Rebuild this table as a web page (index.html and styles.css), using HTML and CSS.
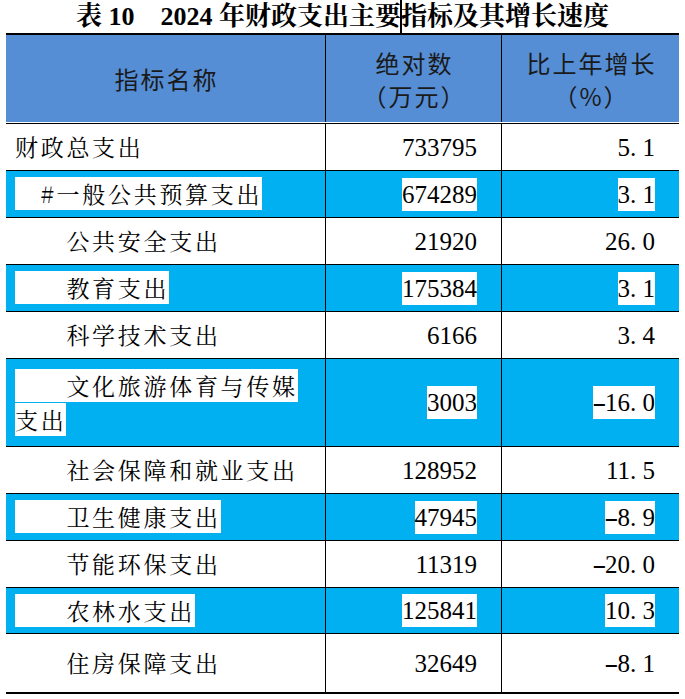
FILE: index.html
```html
<!DOCTYPE html>
<html lang="zh-CN">
<head>
<meta charset="utf-8">
<title>表10 2024年财政支出主要指标及其增长速度</title>
<link rel="stylesheet" href="styles.css">
</head>
<body>
<div class="title">表 10　2024 年财政支出主要<span class="caret"></span>指标及其增长速度</div>
<div class="table">
  <div class="row head">
    <div class="cell c1 hc">指标名称</div>
    <div class="cell c2 hc"><div>绝对数</div><div>（万元）</div></div>
    <div class="cell c3 hc"><div>比上年增长</div><div>（%）</div></div>
  </div>
  <div class="row first">
    <div class="cell c1"><p class="label"><span class="mark">财政总支出</span></p></div>
    <div class="cell c2 num"><span class="mark">733795</span></div>
    <div class="cell c3 num"><span class="mark">5<span class="pt">.</span>1</span></div>
  </div>
  <div class="row hl">
    <div class="cell c1"><p class="label"><span class="mark">　#一般公共预算支出</span></p></div>
    <div class="cell c2 num"><span class="mark">674289</span></div>
    <div class="cell c3 num"><span class="mark">3<span class="pt">.</span>1</span></div>
  </div>
  <div class="row">
    <div class="cell c1"><p class="label"><span class="mark">　　公共安全支出</span></p></div>
    <div class="cell c2 num"><span class="mark">21920</span></div>
    <div class="cell c3 num"><span class="mark">26<span class="pt">.</span>0</span></div>
  </div>
  <div class="row hl">
    <div class="cell c1"><p class="label"><span class="mark">　　教育支出</span></p></div>
    <div class="cell c2 num"><span class="mark">175384</span></div>
    <div class="cell c3 num"><span class="mark">3<span class="pt">.</span>1</span></div>
  </div>
  <div class="row">
    <div class="cell c1"><p class="label"><span class="mark">　　科学技术支出</span></p></div>
    <div class="cell c2 num"><span class="mark">6166</span></div>
    <div class="cell c3 num"><span class="mark">3<span class="pt">.</span>4</span></div>
  </div>
  <div class="row hl tall">
    <div class="cell c1"><p class="label"><span class="mark">　　文化旅游体育与传媒支出</span></p></div>
    <div class="cell c2 num"><span class="mark">3003</span></div>
    <div class="cell c3 num"><span class="mark"><span class="neg">-</span>16<span class="pt">.</span>0</span></div>
  </div>
  <div class="row">
    <div class="cell c1"><p class="label"><span class="mark">　　社会保障和就业支出</span></p></div>
    <div class="cell c2 num"><span class="mark">128952</span></div>
    <div class="cell c3 num"><span class="mark">11<span class="pt">.</span>5</span></div>
  </div>
  <div class="row hl">
    <div class="cell c1"><p class="label"><span class="mark">　　卫生健康支出</span></p></div>
    <div class="cell c2 num"><span class="mark">47945</span></div>
    <div class="cell c3 num"><span class="mark"><span class="neg">-</span>8<span class="pt">.</span>9</span></div>
  </div>
  <div class="row">
    <div class="cell c1"><p class="label"><span class="mark">　　节能环保支出</span></p></div>
    <div class="cell c2 num"><span class="mark">11319</span></div>
    <div class="cell c3 num"><span class="mark"><span class="neg">-</span>20<span class="pt">.</span>0</span></div>
  </div>
  <div class="row hl short">
    <div class="cell c1"><p class="label"><span class="mark">　　农林水支出</span></p></div>
    <div class="cell c2 num"><span class="mark">125841</span></div>
    <div class="cell c3 num"><span class="mark">10<span class="pt">.</span>3</span></div>
  </div>
  <div class="row last">
    <div class="cell c1"><p class="label"><span class="mark">　　住房保障支出</span></p></div>
    <div class="cell c2 num"><span class="mark">32649</span></div>
    <div class="cell c3 num"><span class="mark"><span class="neg">-</span>8<span class="pt">.</span>1</span></div>
  </div>
</div>
</body>
</html>
```

FILE: styles.css
```css
html, body {
  margin: 0;
  padding: 0;
  background: #fff;
  color: #000;
}

.title {
  height: 33px;
  text-align: center;
  white-space: nowrap;
  font: 700 26px/33px "Liberation Serif", "Noto Serif CJK SC", "Noto Sans CJK SC", serif;
}

.caret {
  display: inline-block;
  width: 2px;
  height: 33px;
  margin: 0 -1px;
  vertical-align: top;
  background: #000;
}

.table {
  margin-left: 6px;
  width: 673px;
  border-top: 2px solid #000;
  border-bottom: 2px solid #000;
}

.row {
  display: grid;
  grid-template-columns: 319px 176px 178px;
  height: 47px;
  box-sizing: border-box;
  border-bottom: 1px solid #000;
}

.row.head {
  height: 88px;
  background: #558ed5;
  border-bottom: 1px solid #fff;
}

.row.first {
  height: 48px;
  border-top: 1px solid #000;
}

.row.tall {
  height: 88px;
}

.row.short {
  height: 46px;
}

.row.last {
  height: 58px;
  border-bottom: 0;
}

.row.hl {
  background: #00b0f0;
}

.cell {
  display: flex;
  align-items: center;
  box-sizing: border-box;
  min-width: 0;
}

.c2, .c3 {
  border-left: 1px solid #000;
}

.c1 {
  padding: 0 20px 0 9px;
}

.hc {
  flex-direction: column;
  justify-content: center;
  align-items: center;
  padding: 0 0 0 2px;
  font: 400 24px/33px "Noto Sans CJK SC", sans-serif;
  letter-spacing: 2px;
  color: #1a1a1a;
}

.label {
  margin: 0;
  font: 400 23px/34px "Noto Serif CJK SC", "Noto Sans CJK SC", serif;
  letter-spacing: 2.7px;
}

.num {
  justify-content: flex-end;
  padding-right: 24px;
  font: 400 25px "Liberation Serif", serif;
}

.num .mark {
  display: inline-block;
  line-height: 33px;
}

.pt {
  display: inline-block;
  width: 0.5em;
  text-align: left;
}

.neg {
  display: inline-block;
  width: 0.5em;
  text-align: center;
  transform: scaleX(1.7);
}

.hl .mark {
  background: #fff;
}
```
